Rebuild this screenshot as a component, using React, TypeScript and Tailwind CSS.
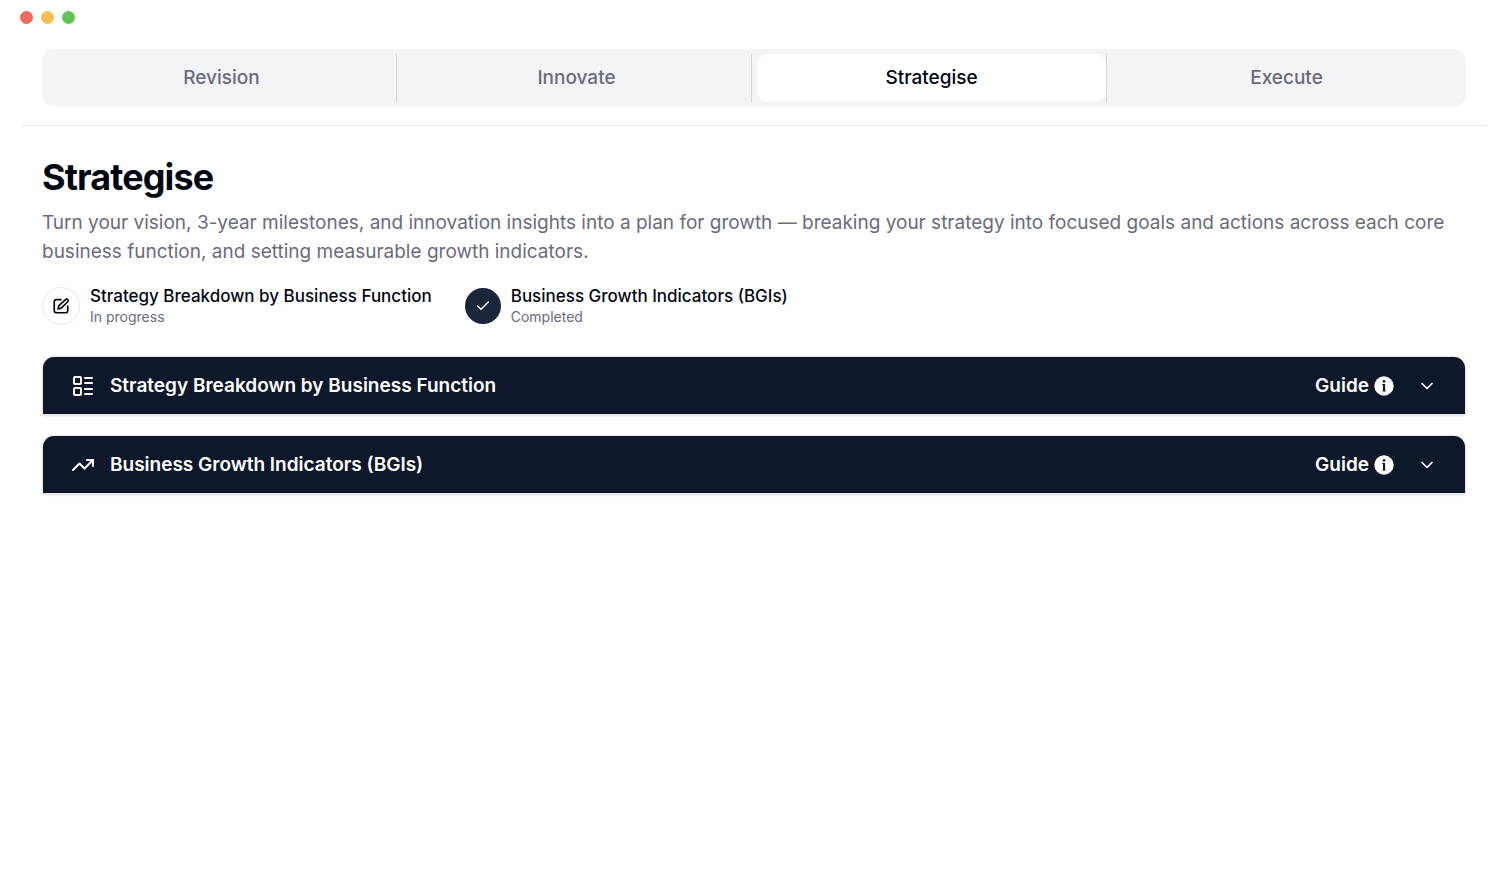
import { useState } from "react";
import { Check, ChevronDown, LayoutList, TrendingUp } from "lucide-react";
import type { LucideIcon } from "lucide-react";

const tabs = ["Revision", "Innovate", "Strategise", "Execute"];

interface Section {
  title: string;
  icon: LucideIcon;
  completed: boolean;
}

const sections: Section[] = [
  { title: "Strategy Breakdown by Business Function", icon: LayoutList, completed: false },
  { title: "Business Growth Indicators (BGIs)", icon: TrendingUp, completed: true },
];

function EditIcon() {
  return (
    <svg
      viewBox="0 0 24 24"
      className="size-[18px]"
      fill="none"
      stroke="currentColor"
      strokeWidth="2.2"
      strokeLinecap="round"
      strokeLinejoin="round"
    >
      <path d="M12 3.5H6a3 3 0 0 0-3 3V18a3 3 0 0 0 3 3h12a3 3 0 0 0 3-3v-6" />
      <path d="M18 3.4a2 2 0 0 1 2.9 2.9L12.4 14.8 8 16l1.2-4.4z" />
    </svg>
  );
}

function InfoIcon() {
  return (
    <svg viewBox="0 0 20 20" className="size-5">
      <circle cx="10" cy="10" r="9.7" fill="#fff" />
      <circle cx="10" cy="5.4" r="1.3" fill="#0f172a" />
      <path d="M8.2 8h2.9v6.6h.5v.8H8.5v-.8H9V8.9h-.8z" fill="#0f172a" />
    </svg>
  );
}

function StepStatus({ title, completed }: { title: string; completed: boolean }) {
  return (
    <li className="flex items-center gap-[10px]">
      {completed ? (
        <span className="flex size-9 items-center justify-center rounded-full bg-[#1b263b] text-white">
          <Check className="size-4" />
        </span>
      ) : (
        <span className="flex size-[38px] items-center justify-center rounded-full border border-gray-200 text-gray-950">
          <EditIcon />
        </span>
      )}
      <div>
        <p className="text-[17px] leading-[22px] font-medium text-gray-950">{title}</p>
        <p className="text-[14px] leading-5 text-[#6b6b7b]">
          {completed ? "Completed" : "In progress"}
        </p>
      </div>
    </li>
  );
}

function SectionBar({ title, icon: Icon }: Section) {
  return (
    <section className="rounded-t-xl border border-gray-200 shadow-sm">
      <div className="flex h-[57px] items-center rounded-t-[11px] bg-[#0f172a] px-7 text-[19px] leading-[29px] font-semibold text-white">
        <Icon className="size-6" />
        <h2 className="ml-[15px] flex-1">{title}</h2>
        <button type="button" className="flex items-center gap-[5px]">
          Guide
          <InfoIcon />
        </button>
        <button type="button" aria-label={`Expand ${title}`} className="ml-[23px]">
          <ChevronDown className="size-5" />
        </button>
      </div>
    </section>
  );
}

export default function App() {
  const [activeTab, setActiveTab] = useState("Strategise");

  return (
    <div className="min-h-screen bg-white pr-[19px] pl-[22px] font-[Inter,sans-serif]">
      {/* Window controls */}
      <div className="-ml-0.5 flex gap-2 pt-[11px]">
        <span className="size-[13px] rounded-full bg-[#ec6a5e]" />
        <span className="size-[13px] rounded-full bg-[#f4bf4f]" />
        <span className="size-[13px] rounded-full bg-[#61c554]" />
      </div>

      {/* Tabs */}
      <header className="border-b border-gray-200 px-5 pt-[25px] pb-[19px]">
        <nav className="flex rounded-xl bg-[#f3f4f6] px-[5px] pt-[5px] pb-1">
          {tabs.map((tab) => (
            <div
              key={tab}
              className="flex-1 border-l border-gray-300 pl-[5px] first:border-l-0 first:pl-0"
            >
              <button
                type="button"
                onClick={() => setActiveTab(tab)}
                className={`block h-12 w-full rounded-xl text-[19px] leading-7 font-medium ${
                  tab === activeTab ? "bg-white text-gray-950" : "text-[#6b6b7b]"
                }`}
              >
                {tab}
              </button>
            </div>
          ))}
        </nav>
      </header>

      <main className="px-5 pt-[30px]">
        <h1 className="text-[36px] leading-[43px] font-bold tracking-tight text-gray-950">
          Strategise
        </h1>
        <p className="mt-[9px] text-[19px] leading-[29px] text-[#6b6b7b]">
          Turn your vision, 3-year milestones, and innovation insights into a plan for growth —
          breaking your strategy into focused goals and actions across each core business function,
          and setting measurable growth indicators.
        </p>

        <ul className="mt-[19px] flex gap-[33px]">
          {sections.map((s) => (
            <StepStatus key={s.title} title={s.title} completed={s.completed} />
          ))}
        </ul>

        <div className="mt-[29px] flex flex-col gap-5">
          {sections.map((s) => (
            <SectionBar key={s.title} {...s} />
          ))}
        </div>
      </main>
    </div>
  );
}
